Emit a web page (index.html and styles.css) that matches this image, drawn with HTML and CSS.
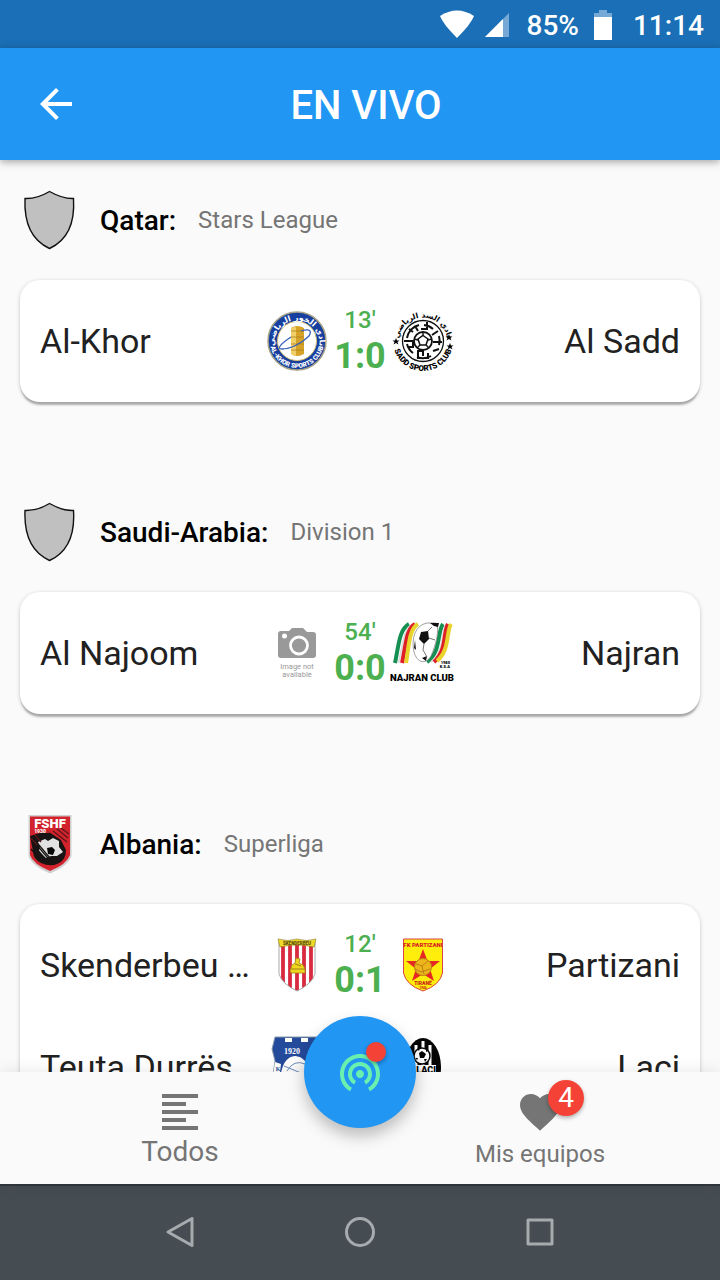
FILE: index.html
```html
<!DOCTYPE html>
<html lang="es">
<head>
<meta charset="utf-8">
<meta name="viewport" content="width=device-width, initial-scale=1">
<title>En vivo</title>
<link rel="stylesheet" href="styles.css">
</head>
<body class="screen">
  <div class="status">
    <svg width="36" height="30" viewBox="0 0 36 30"><path d="M1 6Q18-5 35 6Q32 14 18 28Q4 14 1 6Z" fill="#fff"/></svg>
    <svg class="signal" width="24" height="24" viewBox="0 0 24 24"><path d="M0 24L24 0V24Z" fill="#76a9d6"/><path d="M0 24L18 6V24Z" fill="#fff"/></svg>
    <span class="battery-level">85%</span>
    <svg class="battery" width="18" height="30" viewBox="0 0 18 30"><path d="M0 3H5V0H13V3H18V8H0Z" fill="#76a9d6"/><path d="M0 7H18V30H0Z" fill="#fff"/></svg>
    <span>11:14</span>
  </div>

  <header class="appbar">
    <button class="back" aria-label="Atrás">
      <svg width="48" height="48" viewBox="0 0 24 24"><path d="M20 11H7.830l5.590-5.590L12 4l-8 8 8 8 1.410-1.410L7.830 13H20v-2z" fill="#fff"/></svg>
    </button>
    <h1 class="title">EN VIVO</h1>
  </header>

  <main class="content">
    <section class="league">
      <div class="league-head">
        <svg class="crest" viewBox="0 0 60 60"><path d="M29.500 1.500Q17 9 5 8.500C4 32 11 50 29.500 58.500C48 50 55 32 53.500 8.500Q43 9 29.500 1.500Z" fill="#c0c0c0" stroke="#111" stroke-width="1.400"/></svg>
        <h2 class="country">Qatar:</h2>
        <span class="division">Stars League</span>
      </div>
      <div class="card">
        <div class="match">
          <span class="team">Al-Khor</span>
          <svg class="crest" viewBox="0 0 60 60">
            <defs><path id="khor-top" d="M10 42A22.500 22.500 0 1 1 50 42"/><path id="khor-bottom" d="M3 30A27 27 0 0 0 57 30"/></defs>
            <circle cx="30" cy="30" r="29" fill="#173f9f" stroke="#a7a386" stroke-width="1.500"/>
            <circle cx="30" cy="30" r="19.500" fill="#fff" stroke="#d6c176"/>
            <path d="M24 17Q30 13 37 17V43Q30 47 24 43Z" fill="#d6a329"/><path d="M24 17Q27 16 29 16V45Q26 45 24 43Z" fill="#f0ce68"/>
            <path d="M24 20H37M24 26H37M24 33H37M24 39H37" stroke="#a97812" stroke-width=".7"/>
            <path d="M24 26C12 34 10 38 15 38C23 38 34 33 42 25C45 20 43 17 34 20" fill="none" stroke="#3460bb" stroke-width="1.300"/>
            <text class="mark arabic" font-size="8" fill="#fff" text-anchor="middle"><textPath href="#khor-top" startOffset="50%">نادي الخور الرياضي</textPath></text>
            <text class="mark heavy" font-size="6.500" fill="#fff" text-anchor="middle"><textPath href="#khor-bottom" startOffset="50%">AL-KHOR SPORTS CLUB</textPath></text>
          </svg>
          <div class="result"><span class="minute">13'</span><span class="score">1:0</span></div>
          <svg class="crest" viewBox="0 0 60 60">
            <defs><path id="sadd-top" d="M6 36A24.500 24.500 0 1 1 54 36"/><path id="sadd-bottom" d="M0 30A30 30 0 0 0 60 30"/></defs>
            <g fill="none" stroke="#111" stroke-width="2">
              <circle cx="30" cy="30" r="20.500" stroke-width="1.300"/>
              <path d="M14 27A16 16 0 0 1 26 14M31 14A16 16 0 0 1 40 18M46 25A16 16 0 0 1 46 34M14 33A16 16 0 0 0 20 42M24 46A16 16 0 0 0 38 45M40 40L46 38M11 30H20V36H14M34 11V18H28M22 15L25 20M39 24L45 20M40 31H49M35 48V42M25 48V40H30V45M20 21L16 18"/>
              <circle cx="30" cy="30" r="9" stroke-width="1.800"/>
              <path d="M30 21V25M21 28L25 29M24 37L27 34M36 37L33 34M39 28L35 29" stroke-width="1.400"/>
            </g>
            <path d="M30 24.500L35 28L33 34H27L25 28Z" fill="#fff" stroke="#111" stroke-width="1.500"/>
            <text class="mark arabic" font-size="7.500" text-anchor="middle"><textPath href="#sadd-top" startOffset="50%">نادي السد الرياضي</textPath></text>
            <text class="mark heavy" font-size="8" text-anchor="middle"><textPath href="#sadd-bottom" startOffset="50%">SADD SPORTS CLUB</textPath></text>
            <path d="M3 27L4 29.500H6.500L4.500 31L5.500 33.500L3 32L.5 33.500L1.500 31L-.5 29.500H2ZM56 23L57 25.500H59.500L57.500 27L58.500 29.500L56 28L53.500 29.500L54.500 27L52.500 25.500H55ZM57 32L58 34.500H60.500L58.500 36L59.500 38.500L57 37L54.500 38.500L55.500 36L53.500 34.500H56Z"/>
          </svg>
          <span class="team away">Al Sadd</span>
        </div>
      </div>
    </section>

    <section class="league">
      <div class="league-head">
        <svg class="crest" viewBox="0 0 60 60"><path d="M29.500 1.500Q17 9 5 8.500C4 32 11 50 29.500 58.500C48 50 55 32 53.500 8.500Q43 9 29.500 1.500Z" fill="#c0c0c0" stroke="#111" stroke-width="1.400"/></svg>
        <h2 class="country">Saudi-Arabia:</h2>
        <span class="division">Division 1</span>
      </div>
      <div class="card">
        <div class="match">
          <span class="team">Al Najoom</span>
          <svg class="crest" viewBox="0 0 60 60">
            <path d="M14 8H22L25 5H36L40 9H46Q49 9 49 12V32Q49 35 46 35H14Q11 35 11 32V11Q11 8 14 8Z" fill="#999"/>
            <circle cx="32" cy="22.500" r="8.500" fill="none" stroke="#fff" stroke-width="2.800"/><circle cx="17.500" cy="13" r="2.500" fill="#fff"/>
            <g class="mark" font-size="7.500" fill="#999" text-anchor="middle"><text x="30" y="46">Image not</text><text x="30" y="54">available</text></g>
          </svg>
          <div class="result"><span class="minute">54'</span><span class="score">0:0</span></div>
          <svg class="crest" viewBox="0 0 60 60">
            <g fill="none" stroke-width="4">
              <path d="M2 40C6 21 6 7 16 1" stroke="#169052"/><path d="M5.500 40C10 23 10 6 20 1" stroke="#ddd" stroke-width="2"/><path d="M9 40C13 22 13 6 22 1" stroke="#df1f27"/><path d="M13 40C16 23 16 6 25 1" stroke="#e8d42c"/>
              <path d="M34 39C48 30 44 9 50 1" stroke="#169052"/><path d="M38 39C52 29 48 9 53 1" stroke="#ddd" stroke-width="2"/><path d="M41 39C54 28 50 9 55 1" stroke="#df1f27"/><path d="M44 38C57 27 53 9 58 1" stroke="#e8d42c"/>
            </g>
            <path d="M34 0C22 2 18 16 21 29C24 40 33 42 38 33C43 21 47 7 43 0Z" fill="#fff" stroke="#777" stroke-width=".7"/>
            <path d="M28 9L35 8L36 16L31 21L26 16ZM37 0L46 0L45 4L41 3ZM29 35L34 33L33 38ZM22 17L21 25L23 27Z" fill="#111"/><path d="M31 21L30 27L34 34M36 15L42 17M35 8L39 4" fill="none" stroke="#777"/>
            <g class="mark heavy" text-anchor="end"><text x="57" y="41" font-size="4">1980</text><text x="57" y="45" font-size="4">K.S.A</text></g>
            <text class="mark heavy" x="29" y="58" font-size="9.500" text-anchor="middle">NAJRAN CLUB</text>
          </svg>
          <span class="team away">Najran</span>
        </div>
      </div>
    </section>

    <section class="league">
      <div class="league-head">
        <svg class="crest" viewBox="0 0 60 60">
          <path d="M8.500 1H51.500V42Q48 52 30 59.500Q12 52 8.500 42Z" fill="#cfcfcf"/><path d="M10 2.500H50V41Q47 50 30 57Q13 50 10 41Z" fill="#d2232d"/>
          <path d="M10 22L20 19L30 19L26 16L41 26L46 36Q46 47 37 50Q30 53 21 49Q13 45 13 37Z" fill="#181414"/>
          <path d="M18 28L25 25L28 27L33 24L39 27L39 33L43 38L37 42L31 42L26 44L19 37L20 32Z" fill="#e2e2e2"/><path d="M27 34L32 33L35 36L33 41L28 40Z" fill="#080808"/>
          <path d="M12 29L29 50M15 29L33 50M19 31L35 50M11 35L23 49" stroke="#181414" stroke-width="1.200"/>
          <path d="M11 24L17 31M15 21L21 28M33 17L47 28M37 15L48 24M41 14L49 20" stroke="#5a1618" stroke-width="1.300"/>
          <text class="mark heavy" x="30" y="13.500" font-size="13" fill="#fff" text-anchor="middle">FSHF</text><text class="mark heavy" x="20" y="19" font-size="5" fill="#fff" text-anchor="middle">1930</text>
        </svg>
        <h2 class="country">Albania:</h2>
        <span class="division">Superliga</span>
      </div>
      <div class="card">
        <div class="match">
          <span class="team">Skenderbeu …</span>
          <svg class="crest" viewBox="0 0 60 60">
            <clipPath id="sk-shield"><path d="M12 6H48V39Q45 49 30 56Q15 49 12 39Z"/></clipPath>
            <g clip-path="url(#sk-shield)"><path fill="#fff" d="M11 3H49V57H11Z"/><path d="M16 5V57M23 5V57M30 5V57M37 5V57M44 5V57" stroke="#d82b40" stroke-width="3.800"/></g>
            <path d="M12 6H48V39Q45 49 30 56Q15 49 12 39Z" fill="none" stroke="#aaa"/>
            <path d="M11 4Q21 7 30 4Q40 7 49 4L47 12Q30 8 13 12Z" fill="#eddb27" stroke="#8d791a" stroke-width=".6"/>
            <text class="mark heavy" x="30" y="9.500" font-size="4.500" fill="#5c4c10" text-anchor="middle">SKENDERBEU</text>
            <path d="M23 36L25 30L28 28L29 23L33 24L32 28L36 30L38 34V38H24Z" fill="#efd720" stroke="#a38716" stroke-width=".8"/><path d="M24 34H38M28 29L34 31" stroke="#8a6c15" stroke-width=".8"/>
          </svg>
          <div class="result"><span class="minute">12'</span><span class="score">0:1</span></div>
          <svg class="crest" viewBox="0 0 60 60">
            <path d="M10.500 4H49.500V38Q47 50 30 56Q13 50 10.500 38Z" fill="#ffed0b" stroke="#d7444b"/>
            <text class="mark heavy" x="30" y="11.500" font-size="6" fill="#d82025" text-anchor="middle">FK PARTIZANI</text>
            <path d="M30 14L34.500 26H47L37 34L41 46L30 39L19 46L23 34L13 26H25.500Z" fill="#e72724"/><circle cx="30" cy="32" r="8.500" fill="#eeb51b" stroke="#b98217"/><path d="M23 29L29 31L35 26M29 31L31 39M22 34L28 37L37 34" fill="none" stroke="#b98217"/>
            <g class="mark heavy" fill="#c7251c" text-anchor="middle"><text x="30" y="50" font-size="5">TIRANË</text><text x="30" y="54" font-size="3">1946</text></g>
          </svg>
          <span class="team away">Partizani</span>
        </div>
        <div class="match">
          <span class="team">Teuta Durrës</span>
          <svg class="crest" viewBox="0 0 60 60">
            <path d="M8 0H52V4L56 12L52 22L55 46Q46 53 30 59Q14 53 5 46L8 24L5 12Z" fill="#244a9b" stroke="#89a"/><path d="M18 1H25V5H18ZM34 1H41V5H34Z" fill="#fff"/>
            <path d="M8 25L14 27L12 43L6 39ZM14 36Q17 20 28 19Q40 20 43 36Z" fill="#fff"/><path d="M20 34Q27 22 38 27M17 29L34 36" fill="none" stroke="#6c8fc0"/>
            <text class="mark serif" x="25" y="17" font-size="8" fill="#fff" text-anchor="middle">1920</text><text class="mark serif" x="11" y="34" font-size="6" fill="#244a9b" text-anchor="middle">K</text>
          </svg>
          <div class="result"></div>
          <svg class="crest" viewBox="0 0 60 60">
            <ellipse cx="30" cy="30" rx="18" ry="29" fill="#050505"/><path d="M23 8V29M30 4V29M37 8V29" stroke="#fff" stroke-width="3"/>
            <circle cx="29" cy="19" r="8" fill="#fff" stroke="#050505" stroke-width="1.500"/><path d="M26 16L29 14L33 17L31 21H27ZM24 12L27 11L26 14ZM35 14L33 12V15ZM22 21L24 23L25 21ZM34 22L32 25L31 22Z" fill="#050505"/>
            <path d="M14 28H43V38H14Z" fill="#fff"/><text class="mark heavy" x="43" y="36" font-size="9" text-anchor="end">F. LAÇI</text>
          </svg>
          <span class="team away">Laci</span>
        </div>
      </div>
    </section>
  </main>

  <nav class="tabs" aria-label="Secciones">
    <a class="tab" href="#todos">
      <svg width="48" height="48" viewBox="0 0 24 24"><path d="M15 15H3v2h12v-2zm0-8H3v2h12V7zM3 13h18v-2H3v2zm0 8h18v-2H3v2zM3 3v2h18V3H3z" fill="#757575"/></svg>
      <span class="tab-label active">Todos</span>
    </a>
    <a class="tab" href="#equipos">
      <span class="icon-wrap">
        <svg width="48" height="48" viewBox="0 0 24 24"><path d="M12 21.350l-1.450-1.320C5.400 15.360 2 12.280 2 8.500 2 5.420 4.420 3 7.500 3c1.740 0 3.410.81 4.500 2.090C13.090 3.810 14.760 3 16.500 3 19.580 3 22 5.420 22 8.500c0 3.780-3.400 6.860-8.550 11.540L12 21.350z" fill="#757575"/></svg>
        <span class="badge">4</span>
      </span>
      <span class="tab-label">Mis equipos</span>
    </a>
    <button class="fab" aria-label="En vivo">
      <svg width="48" height="48" viewBox="0 0 24 24"><path d="M12 11c-1.100 0-2 .9-2 2s.9 2 2 2 2-.9 2-2-.9-2-2-2zm6 2c0-3.310-2.690-6-6-6s-6 2.690-6 6c0 2.220 1.210 4.150 3 5.190l1-1.740c-1.190-.7-2-1.970-2-3.450 0-2.210 1.790-4 4-4s4 1.790 4 4c0 1.480-.81 2.750-2 3.450l1 1.740c1.790-1.040 3-2.970 3-5.190zM12 3C6.480 3 2 7.480 2 13c0 3.700 2.010 6.920 4.990 8.650l1-1.730C5.610 18.530 4 15.960 4 13c0-4.420 3.580-8 8-8s8 3.580 8 8c0 2.960-1.610 5.530-4 6.920l1 1.730c2.990-1.730 5-4.950 5-8.650 0-5.520-4.480-10-10-10z" fill="#69f0ae"/></svg>
      <span class="live-dot"></span>
    </button>
  </nav>

  <div class="system">
    <button class="key" aria-label="Volver"><svg width="32" height="32" viewBox="0 0 32 32"><path d="M28 2.500V29.500L4 16Z"/></svg></button>
    <button class="key" aria-label="Inicio"><svg width="32" height="32" viewBox="0 0 32 32"><circle cx="16" cy="16" r="13.500"/></svg></button>
    <button class="key" aria-label="Recientes"><svg width="32" height="32" viewBox="0 0 32 32"><path d="M4 4H28V28H4Z"/></svg></button>
  </div>
</body>
</html>
```
FILE: styles.css
```css
* { box-sizing: border-box; }

.screen {
  margin: 0;
  height: 100vh;
  display: flex;
  flex-direction: column;
  overflow: hidden;
  background: #fafafa;
  color: #212121;
  font-family: Roboto, "Noto Sans", sans-serif;
}

button { border: 0; padding: 0; background: none; font: inherit; }
svg { display: block; flex: none; }

.status {
  flex: none;
  height: 48px;
  padding: 2px 16px 0 0;
  display: flex;
  align-items: center;
  justify-content: flex-end;
  background: #1a6fb6;
  color: #fff;
  font-size: 28px;
  font-weight: 500;
}
.signal { margin: 0 18px 0 10px; }
.battery { margin: 0 22px 0 16px; }
.battery { margin: 0 21px 0 15px; }

.appbar {
  flex: none;
  position: relative;
  z-index: 1;
  height: 112px;
  padding-right: 100px;
  display: flex;
  align-items: center;
  background: #2196f3;
  color: #fff;
  box-shadow: 0 2px 8px rgba(0, 0, 0, .35);
}
.back { width: 112px; height: 112px; display: grid; place-items: center; }
.title { flex: 1; margin: 0; padding-top: 4px; text-align: center; font-size: 40px; line-height: 48px; font-weight: 500; }

.content { flex: 1; min-height: 0; overflow: hidden; padding: 0 20px; }
.league { margin-bottom: 70px; }
.league-head { height: 120px; display: flex; align-items: center; }
.crest { width: 60px; height: 60px; overflow: visible; }
.country { margin: 0 22px 0 20px; color: #000; font-size: 28px; font-weight: 500; }
.division { color: #757575; font-size: 24px; }

.card {
  padding: 10px 20px;
  border-radius: 20px;
  background: #fff;
  box-shadow: 0 4px 2px -1px rgba(0, 0, 0, .25), 0 1px 4px rgba(0, 0, 0, .2);
}
.match { min-height: 102px; display: grid; grid-template-columns: 1fr 60px 66px 60px 1fr; align-items: center; }
.team { overflow: hidden; text-overflow: ellipsis; white-space: nowrap; font-size: 34px; line-height: 44px; }
.away { text-align: right; }
.result { display: flex; flex-direction: column; align-items: center; padding-bottom: 2px; color: #4caf50; }
.minute { font-size: 24px; line-height: 32px; font-weight: 500; }
.score { font-size: 36px; line-height: 40px; font-weight: 700; }

.mark { font-family: Roboto, sans-serif; }
.heavy { font-weight: 900; }
.arabic { font-family: "DejaVu Sans", sans-serif; font-weight: 700; }
.serif { font-family: "Liberation Serif", serif; font-weight: 700; }

.tabs {
  flex: none;
  position: relative;
  height: 112px;
  display: flex;
  background: #fafafa;
  box-shadow: 0 0 16px rgba(0, 0, 0, .1);
}
.tab {
  flex: 1;
  padding-top: 16px;
  display: flex;
  flex-direction: column;
  align-items: center;
  color: #757575;
  text-decoration: none;
}
.tab-label { font-size: 24px; line-height: 36px; }
.active { font-size: 28px; line-height: 32px; }
.icon-wrap { position: relative; }
.badge {
  position: absolute;
  top: -8px;
  right: -20px;
  width: 36px;
  height: 36px;
  border-radius: 50%;
  background: #f44336;
  color: #fff;
  font-size: 28px;
  line-height: 36px;
  text-align: center;
  box-shadow: 0 2px 4px rgba(0, 0, 0, .3);
}
.fab {
  position: absolute;
  top: -56px;
  left: calc(50% - 56px);
  width: 112px;
  height: 112px;
  border-radius: 50%;
  display: grid;
  place-items: center;
  background: #2196f3;
  box-shadow: 0 8px 16px rgba(0, 0, 0, .25);
}
.live-dot {
  position: absolute;
  top: 26px;
  right: 30px;
  width: 20px;
  height: 20px;
  border-radius: 50%;
  background: #f44336;
  box-shadow: 0 2px 4px rgba(0, 0, 0, .3);
}

.system {
  flex: none;
  height: 96px;
  padding: 0 90px 2px;
  display: flex;
  border-top: 2px solid #30373c;
  background: #454d52;
}
.key { flex: 1; display: grid; place-items: center; fill: none; stroke: #a6abae; stroke-width: 3; stroke-linejoin: round; }
```
